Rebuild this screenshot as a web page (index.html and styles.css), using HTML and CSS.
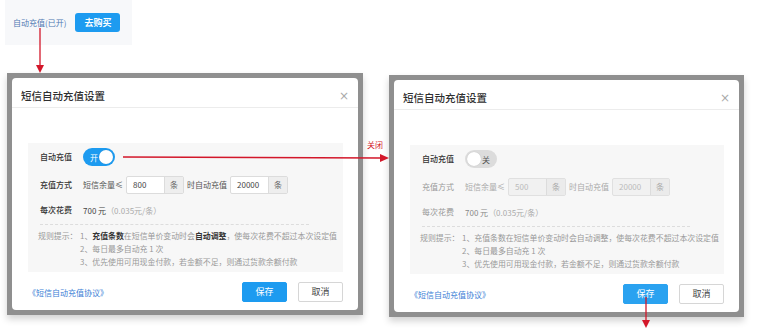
FILE: index.html
```html
<!DOCTYPE html>
<html lang="zh-CN">
<head>
<meta charset="utf-8">
<title>短信自动充值设置</title>
<link rel="stylesheet" href="styles.css">
</head>
<body>
<div class="page">
  <div class="top">
    <span class="status">自动充值(已开)</span>
    <button class="buy">去购买</button>
  </div>

  <div class="canvas">
    <div class="frame">
      <div class="dialog">
        <div class="dlg-head">
          <span class="dlg-title">短信自动充值设置</span>
          <span class="close">×</span>
        </div>
        <div class="dlg-body">
          <div class="panel">
            <div class="row row-toggle">
              <span class="label dark">自动充值</span>
              <span class="switch on"><span class="sw-text">开</span><span class="knob"></span></span>
            </div>
            <div class="row row-inputs">
              <span class="label dark">充值方式</span>
              <span class="txt">短信余量≤</span>
              <span class="field"><span class="val">800</span><span class="addon">条</span></span>
              <span class="txt">时自动充值</span>
              <span class="field"><span class="val">20000</span><span class="addon">条</span></span>
            </div>
            <div class="row row-cost">
              <span class="label dark">每次花费</span>
              <span class="cost">700 元</span><span class="unit">（0.035元/条）</span>
            </div>
            <div class="rules">
              <span class="rules-label">规则提示：</span>
              <div class="rules-list">
                <div>1、<b>充值条数</b>在短信单价变动时会<b>自动调整</b>，使每次花费不超过本次设定值</div>
                <div>2、每日最多自动充 1 次</div>
                <div>3、优先使用可用现金付款，若金额不足，则通过货款余额付款</div>
              </div>
            </div>
          </div>
          <div class="dlg-foot">
            <a class="agreement">《短信自动充值协议》</a>
            <div class="btns">
              <button class="btn primary">保存</button>
              <button class="btn">取消</button>
            </div>
          </div>
        </div>
      </div>
    </div>

    <div class="frame frame-right">
      <div class="dialog off">
        <div class="dlg-head">
          <span class="dlg-title">短信自动充值设置</span>
          <span class="close">×</span>
        </div>
        <div class="dlg-body">
          <div class="panel">
            <div class="row row-toggle">
              <span class="label dark">自动充值</span>
              <span class="switch"><span class="knob"></span><span class="sw-text">关</span></span>
            </div>
            <div class="row row-inputs">
              <span class="label">充值方式</span>
              <span class="txt">短信余量≤</span>
              <span class="field disabled"><span class="val">500</span><span class="addon">条</span></span>
              <span class="txt">时自动充值</span>
              <span class="field disabled"><span class="val">20000</span><span class="addon">条</span></span>
            </div>
            <div class="row row-cost">
              <span class="label">每次花费</span>
              <span class="cost">700 元</span><span class="unit">（0.035元/条）</span>
            </div>
            <div class="rules">
              <span class="rules-label">规则提示：</span>
              <div class="rules-list">
                <div>1、充值条数在短信单价变动时会自动调整，使每次花费不超过本次设定值</div>
                <div>2、每日最多自动充 1 次</div>
                <div>3、优先使用可用现金付款，若金额不足，则通过货款余额付款</div>
              </div>
            </div>
          </div>
          <div class="dlg-foot">
            <a class="agreement">《短信自动充值协议》</a>
            <div class="btns">
              <button class="btn primary">保存</button>
              <button class="btn">取消</button>
            </div>
          </div>
        </div>
      </div>
    </div>
  </div>

  <span class="note">关闭</span>
  <svg class="arrows" width="763" height="335" viewBox="0 0 763 335">
    <g stroke="#d3172a" stroke-width="1.3" fill="none">
      <line x1="40" y1="28" x2="40" y2="66"/>
      <line x1="123" y1="157" x2="381" y2="158"/>
      <line x1="646" y1="297" x2="646" y2="321"/>
    </g>
    <g fill="#d3172a">
      <polygon points="36,65 44,65 40,73"/>
      <polygon points="380,154 380,162 389,158"/>
      <polygon points="642,320 650,320 646,328"/>
    </g>
  </svg>
</div>
</body>
</html>
```
FILE: styles.css
```css
* { box-sizing: border-box; }
html, body { margin: 0; padding: 0; background: #fff; }
body {
  font-family: "Noto Sans CJK SC", "Noto Sans", sans-serif;
  color: #333;
  width: 763px;
  height: 335px;
  overflow: hidden;
}
.page { position: relative; width: 763px; height: 335px; }

.top {
  margin-left: 5px;
  width: 127px;
  height: 45px;
  background: #f7f8fa;
  display: flex;
  align-items: center;
  padding-left: 8px;
  gap: 9px;
}
.status { font-size: 8px; color: #4f79b3; line-height: 10px; }
.buy {
  border: 0;
  background: #1d9bf0;
  color: #fff;
  font-family: inherit;
  font-size: 9px;
  font-weight: 700;
  width: 45px;
  height: 19px;
  border-radius: 3px;
  padding: 0;
  line-height: 19px;
}

.canvas {
  display: flex;
  align-items: flex-start;
  gap: 26px;
  margin-top: 28px;
  padding-left: 7px;
}
.frame {
  width: 356px;
  background: #8f8f8f;
  padding: 5px;
  box-shadow: 0 4px 7px rgba(0,0,0,0.18);
}
.frame-right { width: 355px; margin-top: 2px; }

.dialog {
  background: #fff;
  border-radius: 4px;
  height: 232px;
  display: flex;
  flex-direction: column;
}
.dlg-head {
  height: 30px;
  border-bottom: 1px solid #ececec;
  display: flex;
  justify-content: space-between;
  align-items: flex-start;
  padding: 9px 9px 0 9px;
}
.dlg-title { font-size: 10.5px; line-height: 18px; color: #2f2f2f; font-weight: 500; }
.close { font-size: 12px; line-height: 18px; color: #aaa; font-family: "DejaVu Sans", sans-serif; }

.dlg-body { padding: 35px 15px 0 16px; }
.panel {
  background: #f7f7f7;
  padding: 5px 12px 4px 12px;
  height: 129px;
}
.row { display: flex; align-items: center; font-size: 8px; }
.label { width: 43px; flex: none; color: #333; line-height: 10px; }
.label.dark { font-weight: 500; }
.row-toggle { height: 18px; }
.row-inputs { height: 18px; margin-top: 10px; gap: 3px; }
.row-inputs .label { width: 40px; }
.row-cost { height: 14px; margin-top: 9px; }
.txt { color: #555; line-height: 10px; }

.switch {
  width: 32px;
  height: 18px;
  border-radius: 9px;
  background: #dcdcdc;
  display: flex;
  align-items: center;
  justify-content: space-between;
  padding: 0 7px 0 2px;
  font-size: 8px;
}
.switch.on { background: #1d9bf0; padding: 0 2px 0 7px; }
.knob { width: 14px; height: 14px; border-radius: 50%; background: #fff; box-shadow: 0 0 1px rgba(0,0,0,0.2); }
.switch.on .sw-text { color: #fff; }
.switch .sw-text { color: #555; }

.field {
  display: flex;
  width: 58px;
  height: 18px;
  border: 1px solid #dcdcdc;
  border-radius: 2px;
  background: #fff;
}
.val { flex: 1; padding-left: 6px; line-height: 16px; color: #444; font-size: 8px; }
.addon {
  width: 19px;
  background: #eee;
  border-left: 1px solid #dcdcdc;
  text-align: center;
  line-height: 16px;
  color: #666;
}

.cost { color: #444; }
.unit { color: #aaa; }

.rules {
  margin-top: 7px;
  border-top: 1px dashed #ddd;
  padding-top: 4px;
  display: flex;
  font-size: 7.9px;
  line-height: 13px;
  color: #999;
  margin-right: 22px;
}
.rules-label { width: 40px; flex: none; margin-left: -2px; margin-right: 2px; }
.rules-list { white-space: nowrap; }
.rules-list b { color: #333; font-weight: 700; }

.dlg-foot {
  display: flex;
  justify-content: space-between;
  align-items: center;
  margin-top: 10px;
}
.agreement { color: #3b80d6; font-size: 8px; }
.btns { display: flex; gap: 11px; }
.btn {
  width: 45px;
  height: 20px;
  padding: 0;
  border: 1px solid #d6d6d6;
  background: #fff;
  border-radius: 2px;
  font-family: inherit;
  font-size: 9px;
  color: #444;
  line-height: 18px;
}
.btn.primary { background: #1d9bf0; border-color: #1d9bf0; color: #fff; }

/* disabled/off state */
.off .label { color: #999; }
.off .label.dark { color: #333; }
.off .txt { color: #aaa; }
.off .cost { color: #888; }
.off .field.disabled { background: #f1f1f1; border-color: #e0e0e0; }
.off .field.disabled .val { color: #bbb; }
.off .field.disabled .addon { background: #ebebeb; color: #aaa; }
.off .rules { color: #999; }
.off .btn.primary { background: #2aa2f0; border-color: #2aa2f0; }

.note {
  position: absolute;
  left: 367px;
  top: 140px;
  font-size: 8px;
  line-height: 10px;
  color: #d3172a;
}
.arrows { position: absolute; left: 0; top: 0; pointer-events: none; }
```
